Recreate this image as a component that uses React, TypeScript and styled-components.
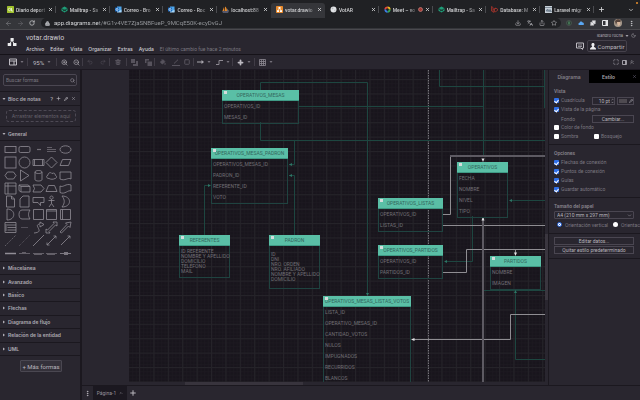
import React from "react";
import styled, { createGlobalStyle, css } from "styled-components";
import {
  ArrowLeft,
  ArrowRight,
  RotateCw,
  Lock,
  Star,
  Share,
  Puzzle,
  Search,
  ZoomIn,
  ZoomOut,
  Undo2,
  Redo2,
  Trash2,
  PaintBucket,
  Pencil,
  Square,
  Moon,
  Plus,
  X,
  ChevronDown,
  ChevronUp,
  ChevronsUp,
  Maximize,
  EllipsisVertical,
  Languages,
  Download,
} from "lucide-react";

const c = {
  panel: "#29262f",
  sheet: "#18151c",
  line: "#1b181f",
  text: "#b9b6bd",
  dim: "#7b7780",
  faint: "#65616b",
  node: "#5abfa6",
  teal: "#1d4640",
};

const wide = `Inter, "Liberation Sans", sans-serif`;

const GlobalStyle = createGlobalStyle`
  * { box-sizing: border-box; }
  html, body, #root { height: 100%; }
  body { margin: 0; background: ${c.panel}; font-family: Roboto, "Liberation Sans", sans-serif; font-size: 6px; color: ${c.text}; overflow: hidden; }
  button, input, select { font: inherit; color: inherit; background: none; border: 0; padding: 0; margin: 0; outline: none; }
  svg { display: block; flex: none; }
`;

const Window = styled.div`
  display: flex;
  flex-direction: column;
  height: 100vh;
`;

/* ---------- browser chrome ---------- */

const TabStrip = styled.div`
  display: flex;
  align-items: stretch;
  position: relative;
  height: 18px;
  padding: 3px 0 0 2px;
  background: #202124;
  color: #d0d1d3;
`;

const CaptureDot = styled.span`
  position: absolute;
  top: 2px;
  right: 2px;
  width: 2px;
  height: 2px;
  border-radius: 1px;
  background: #e8912d;
`;

const TabList = styled.div`
  display: flex;
  flex: 1;
  min-width: 0;
`;

const BrowserTab = styled.div<{ $active?: boolean; $plain?: boolean }>`
  display: flex;
  align-items: center;
  gap: 2px;
  flex: 1 1 0;
  min-width: 0;
  padding: 0 3px 2px 5px;
  border-radius: 3px 3px 0 0;
  background: ${(p) => (p.$active ? "#35363a" : "transparent")};
  background-image: ${(p) => (p.$plain || p.$active ? "none" : "linear-gradient(#4a4b4f, #4a4b4f)")};
  background-size: 1px 7px;
  background-position: right 3px;
  background-repeat: no-repeat;
`;

const TabTitle = styled.button`
  flex: 1;
  min-width: 0;
  text-align: left;
  white-space: nowrap;
  font-size: 5px;
  line-height: 8px;
  font-weight: 500;
  mask-image: linear-gradient(90deg, #000 70%, rgba(0, 0, 0, 0.2));
`;

const IconButton = styled.button`
  display: grid;
  place-items: center;
  flex: none;
`;

const StripEnd = styled.div`
  display: flex;
  justify-content: space-between;
  align-items: center;
  width: 46px;
  padding: 0 6px 2px 4px;
`;

const AddressRow = styled.div`
  display: flex;
  align-items: center;
  height: 12px;
  padding: 0 5px 1px 5px;
  background: #35363a;
  border-bottom: 1px solid #4a4a4e;
  color: #c6c7ca;
`;

const NavButtons = styled.div`
  display: flex;
  gap: 5px;
  width: 36px;
`;

const Omnibox = styled.label`
  display: flex;
  align-items: center;
  flex: 1;
  gap: 4px;
  height: 10px;
  padding: 0 4px 0 4px;
  border-radius: 5px;
  background: #202124;
`;

const UrlInput = styled.input`
  flex: 1;
  min-width: 0;
  font-size: 6px;
  line-height: 8px;
  color: transparent;
  background: linear-gradient(90deg, #e8eaed 45px, #9a9da1 45px);
  background-clip: text;
`;

const Cluster = styled.div<{ $gap: number }>`
  display: flex;
  align-items: center;
  gap: ${(p) => p.$gap}px;
`;

const Extensions = styled(Cluster)`
  padding-left: 5px;
`;

/* ---------- application header ---------- */

const Header = styled.header`
  display: flex;
  height: 25px;
  padding-left: 7px;
  border-bottom: 1px solid #151218;
`;

const HeaderText = styled.div`
  flex: 1;
  padding: 3px 0 0 9px;
  font-family: ${wide};
`;

const DocTitle = styled.h1`
  margin: 0;
  font-family: Roboto, "Liberation Sans", sans-serif;
  font-size: 7px;
  line-height: 10px;
  font-weight: 400;
  color: #cfccd3;
`;

const MenuBar = styled.nav`
  display: flex;
  align-items: center;
  gap: 6px;
  height: 11px;
  white-space: nowrap;
`;

const MenuItem = styled.button`
  font-size: 5px;
  line-height: 8px;
  font-weight: 500;
  color: #cfccd3;
`;

const SavedNote = styled.span`
  font-family: Roboto, "Liberation Sans", sans-serif;
  font-size: 5px;
  line-height: 8px;
  color: ${c.dim};
`;

const Account = styled.div`
  display: flex;
  flex-direction: column;
  align-items: flex-end;
  gap: 1px;
  padding-top: 2px;
`;

const UserRow = styled.div`
  display: flex;
  align-items: center;
  gap: 2px;
  height: 7px;
  padding-right: 4px;
  font-family: ${wide};
  font-size: 4px;
`;

const ShareRow = styled.div`
  display: flex;
  align-items: center;
  gap: 3px;
  padding-right: 13px;
`;

const ShareButton = styled.button`
  display: flex;
  align-items: center;
  justify-content: center;
  gap: 2px;
  width: 40px;
  height: 12px;
  border: 1px solid #45414b;
  border-radius: 2px;
  font-size: 6px;
`;

/* ---------- toolbar ---------- */

const Toolbar = styled.div`
  display: flex;
  align-items: center;
  height: 15px;
  padding: 0 4px 0 5px;
  border-bottom: 1px solid #1d1922;
`;

const Tool = styled.button<{ $w: number; $off?: boolean }>`
  display: flex;
  align-items: center;
  justify-content: center;
  gap: 3px;
  width: ${(p) => p.$w}px;
  font-size: 6px;
  color: ${(p) => (p.$off ? "#57535d" : "#bdbac1")};
`;

const Divider = styled.span`
  width: 1px;
  height: 8px;
  background: #403c46;
`;

const Spacer = styled.span`
  flex: 1;
`;

/* ---------- body ---------- */

const Main = styled.main`
  display: flex;
  flex: 1;
  min-height: 0;
`;

const Sidebar = styled.aside`
  width: 82px;
  flex: none;
  border-right: 2px solid ${c.line};
`;

const SearchArea = styled.div`
  height: 22px;
  padding: 4px 3px;
  border-bottom: 1px solid ${c.line};
`;

const SearchBox = styled.label`
  display: flex;
  align-items: center;
  height: 12px;
  padding: 0 1px 0 2px;
  border: 1px solid #4b4752;
  border-radius: 2px;
  color: #8b8790;
`;

const SearchInput = styled.input`
  flex: 1;
  min-width: 0;
  font-size: 5px;
  line-height: 8px;
  &::placeholder { color: #7b7780; opacity: 1; }
`;

const SectionTitle = styled.div`
  display: flex;
  align-items: center;
  height: 14px;
  padding: 0 4px 0 2px;
  border-bottom: 1px solid ${c.line};
`;

const SectionToggle = styled.button`
  display: flex;
  align-items: center;
  gap: 2px;
  flex: 1;
  font-family: ${wide};
  font-size: 5px;
  line-height: 8px;
  font-weight: 600;
  color: #aeabb3;
  white-space: nowrap;
`;

const DropArea = styled.div`
  height: 21px;
  padding: 4px 4px 4px 6px;
  border-bottom: 1px solid ${c.line};
`;

const DropHint = styled.div`
  height: 12px;
  border: 1px dashed #4d4954;
  border-radius: 3px;
  text-align: center;
  font-family: ${wide};
  font-size: 5px;
  line-height: 10px;
  color: ${c.faint};
  white-space: nowrap;
`;

const Palette = styled.div`
  display: grid;
  grid-template-columns: repeat(5, 1fr);
  grid-auto-rows: 13px;
  height: 121px;
  padding: 2px 7px 0 4px;
  overflow: hidden;
  border-bottom: 1px solid ${c.line};
`;

const Collapsed = styled.div`
  display: flex;
  flex-direction: column;
  height: 94px;
  ${SectionTitle} { flex: 1; }
`;

const MoreShapes = styled.button`
  display: block;
  width: 42px;
  height: 12px;
  margin: 4px auto 0 20px;
  border: 1px solid #4a4751;
  border-radius: 1px;
  background: #34313a;
  font-size: 6px;
  white-space: nowrap;
`;

const Workspace = styled.div`
  display: flex;
  flex-direction: column;
  flex: 1;
  min-width: 0;
`;

const Work = styled.div`
  display: flex;
  flex: 1;
  min-height: 0;
`;

const CanvasColumn = styled.section`
  display: flex;
  flex-direction: column;
  flex: 1;
  min-width: 0;
`;

const CanvasRow = styled.div`
  display: flex;
  flex: 1;
  min-height: 0;
  padding-left: 47px;
`;

const Sheet = styled.div`
  position: relative;
  flex: 1;
  overflow: hidden;
  background: ${c.sheet};
`;

const Wiring = styled.svg`
  position: absolute;
  inset: 0;
  width: 100%;
  height: 100%;
`;

const VTrack = styled.div`
  width: 3px;
  padding-top: 164px;
`;

const VThumb = styled.div`
  height: 66px;
  background: #3a363f;
`;

const HTrack = styled.div`
  height: 3px;
  padding-left: 103px;
`;

const HThumb = styled.div`
  width: 118px;
  height: 3px;
  background: #38343d;
`;

const Entity = styled.article<{ $x: number; $y: number; $w: number }>`
  position: absolute;
  left: ${(p) => p.$x}px;
  top: ${(p) => p.$y}px;
  width: ${(p) => p.$w}px;
  border: 1px solid #1f4340;
  font-size: 5px;
  color: #716f75;
  white-space: nowrap;
`;

const EntityTitle = styled.h2`
  display: flex;
  align-items: center;
  justify-content: center;
  position: relative;
  height: 11px;
  margin: -1px -1px 0;
  font-size: 5px;
  font-weight: 400;
  color: #33665c;
  background: ${c.node};
  border: solid #3f9a85;
  border-width: 0 0 1px;
`;

const Fold = styled.button`
  position: absolute;
  left: 2px;
  top: 1px;
  width: 3px;
  height: 3px;
  background: #d5dcdc;
`;

const Field = styled.div`
  height: 11px;
  padding-left: 1px;
  line-height: 11px;
`;

const FieldBlock = styled.div<{ $pad: number }>`
  padding: ${(p) => p.$pad}px 1px;
  line-height: 5px;
`;

/* ---------- format panel ---------- */

const Panel = styled.aside`
  width: 92px;
  flex: none;
  overflow: hidden;
  border-left: 1px solid ${c.line};
  font-size: 5px;
  color: ${c.dim};
`;

const PanelTabs = styled.div`
  display: flex;
  height: 13px;
`;

const PanelTab = styled.button<{ $idle?: boolean; $w: number }>`
  display: grid;
  place-items: center;
  width: ${(p) => p.$w}px;
  font-family: ${wide};
  font-size: 5px;
  font-weight: 600;
  color: ${(p) => (p.$idle ? "#a9a6ad" : "#85818a")};
  background: ${(p) => (p.$idle ? "#000" : "transparent")};
`;

const Group = styled.section`
  padding: 3px 6px 3px 5px;
  border-bottom: 1px solid ${c.line};
`;

const GroupTitle = styled.h3`
  margin: 0;
  font-size: 5px;
  line-height: 10px;
  font-weight: 600;
  color: #85818a;
`;

const Option = styled.div`
  display: flex;
  align-items: center;
  height: 9px;
  white-space: nowrap;
`;

const CheckLabel = styled.label<{ $w?: number }>`
  display: flex;
  align-items: center;
  gap: 2px;
  flex: ${(p) => (p.$w ? `0 0 ${p.$w}px` : "1")};
  line-height: 9px;
`;

const Check = styled.input`
  appearance: none;
  display: grid;
  place-items: center;
  width: 5px;
  height: 5px;
  border-radius: 1px;
  background: #fff;
  &:checked { background: #2f6fe8; }
  &:checked::after {
    content: "";
    width: 2px;
    height: 3px;
    border: solid #fff;
    border-width: 0 1px 1px 0;
    transform: rotate(40deg);
  }
`;

const Radio = styled.input`
  appearance: none;
  width: 5px;
  height: 5px;
  border-radius: 50%;
  background: #fff;
  &:checked {
    border: 1px solid #2f6fe8;
    background: radial-gradient(#2f6fe8 40%, #fff 45%);
  }
`;

const boxed = css`
  height: 8px;
  border: 1px solid #4a4651;
  color: ${c.text};
  font-size: 5px;
  line-height: 6px;
`;

const SizeBox = styled.span`
  ${boxed}
  display: flex;
  align-items: center;
  width: 23px;
  margin-right: 2px;
`;

const SizeInput = styled.input`
  width: 17px;
  text-align: right;
`;

const Spin = styled.span`
  display: flex;
  flex-direction: column;
  padding-left: 1px;
`;

const GridColor = styled.button`
  ${boxed}
  display: flex;
  align-items: center;
  gap: 2px;
  width: 17px;
  padding-left: 1px;
`;

const Swatch = styled.span`
  width: 8px;
  height: 4px;
  background: #4e4a50;
`;

const FillLabel = styled.span`
  flex: 1;
  padding-left: 7px;
`;

const ChangeButton = styled.button`
  ${boxed}
  width: 42px;
`;

const PaperSelect = styled.span`
  ${boxed}
  display: flex;
  align-items: center;
  padding-right: 1px;
  border-radius: 1px;
`;

const Select = styled.select`
  appearance: none;
  flex: 1;
  min-width: 0;
  padding-left: 2px;
`;

const Orientation = styled.div`
  display: flex;
  gap: 5px;
  height: 11px;
  padding-left: 3px;
  align-items: center;
  white-space: nowrap;
`;

const RadioLabel = styled.label`
  display: flex;
  align-items: center;
  gap: 3px;
  flex: none;
`;

const WideButton = styled.button`
  ${boxed}
  display: block;
  width: 100%;
  margin-bottom: 1px;
`;

/* ---------- footer ---------- */

const PageBar = styled.footer`
  display: flex;
  align-items: center;
  height: 15px;
  border-top: 1px solid ${c.line};
`;

const PageTab = styled.button`
  display: flex;
  align-items: center;
  justify-content: center;
  gap: 3px;
  align-self: stretch;
  width: 34px;
  background: #1b1820;
  font-size: 5px;
  color: #96929b;
`;

const BarSlot = styled.button`
  display: grid;
  place-items: center;
  width: 11px;
`;

/* ---------- small drawings ---------- */

const Caret = ({ side = "down", color = "#77737c" }: { side?: "down" | "right"; color?: string }) => (
  <svg width="4" height="4" viewBox="0 0 4 4" fill={color}>
    <path d={side === "down" ? "M.5 1h3L2 3z" : "M1 .5v3L3 2z"} />
  </svg>
);

type FavKind = "ole" | "mail" | "outlook" | "pma" | "drawio" | "globe" | "meet" | "laravel" | "doc";

const Favicon = ({ kind }: { kind: FavKind }) => (
  <svg width="7" height="7" viewBox="0 0 14 14">
    {kind === "ole" && (
      <>
        <rect width="14" height="14" rx="1" fill="#9fc02c" />
        <circle cx="5" cy="7" r="2.4" fill="none" stroke="#fff" strokeWidth="1.4" />
        <path d="M9 4v6h3" stroke="#fff" strokeWidth="1.4" fill="none" />
      </>
    )}
    {kind === "mail" && (
      <>
        <path d="M1 4.500 7 1l6 3.500v5L7 13 1 9.500z" fill="#1f9d78" />
        <path d="M1 5l6 4 6-4M4 10l3-2 3 2" stroke="#17211f" strokeWidth="1.500" fill="none" />
      </>
    )}
    {kind === "outlook" && (
      <>
        <rect x="4" y="1" width="9" height="11" fill="#4ea5ea" />
        <path d="M4 7l5 3 4-3v6H4z" fill="#a7d5f7" />
        <rect y="3" width="8" height="8" rx="1" fill="#1667bd" />
        <circle cx="4" cy="7" r="2" fill="none" stroke="#fff" strokeWidth="1.300" />
      </>
    )}
    {kind === "pma" && (
      <>
        <path d="M1 10 4 2l1 8zM6 10V1c3 2 4 5 4 9z" fill="#e58a2b" />
        <path d="M0 11h14l-2 2H2z" fill="#8b8fb0" />
        <path d="M11 10V5l2 5z" fill="#b9bbd0" />
      </>
    )}
    {kind === "drawio" && (
      <>
        <rect width="14" height="14" rx="1.500" fill="#e88a2c" />
        <path d="M7 4 4 9M7 4l3 5" stroke="#fff" strokeWidth="1.200" />
        <path d="M5 2h4v3.500H5zM2 8.500h4V12H2zM8 8.500h4V12H8z" fill="#fff" />
      </>
    )}
    {kind === "globe" && (
      <>
        <circle cx="7" cy="7" r="6" fill="#e2e4e6" />
        <path d="M3 4l3-1 1 2-2 2zM8 8l3-1-1 4z" fill="#b7babd" />
      </>
    )}
    {kind === "meet" && (
      <g fill="none" strokeWidth="3.500">
        <path d="M2.500 7A4.500 4.500 0 0 1 7 2.500" stroke="#e8453c" />
        <path d="M7 2.500A4.500 4.500 0 0 1 11.500 7" stroke="#f5b921" />
        <path d="M11.500 7A4.500 4.500 0 0 1 7 11.500" stroke="#35a853" />
        <path d="M7 11.500A4.500 4.500 0 0 1 2.500 7" stroke="#3d7eea" />
      </g>
    )}
    {kind === "laravel" && (
      <path d="M1 1l3 2v7l4 2 5-3V6l-3-1.500L7 6v5M4 7l6-3M1 1v9l5 3" fill="none" stroke="#b0362c" strokeWidth="1.500" />
    )}
    {kind === "doc" && (
      <>
        <rect width="14" height="14" fill="#c7d0d8" />
        <path d="M0 3h14M2 10l3-4 3 3 2-2 3 4z" stroke="#5b6b7a" strokeWidth="1.300" fill="#8192a1" />
      </>
    )}
  </svg>
);

const DrawioLogo = () => (
  <svg width="10" height="25" viewBox="0 0 10 25" fill="#ececee">
    <path d="M5 10 2.500 14.500M5 10l2.500 4.500" stroke="#ececee" strokeWidth="1" />
    <rect x="3.500" y="8" width="3.200" height="3" rx=".5" />
    <rect x=".7" y="13" width="3.500" height="3" rx=".5" />
    <rect x="6" y="13" width="3.500" height="3" rx=".5" />
  </svg>
);

const shapes: React.ReactNode[] = [
  <rect x="1" y="3.5" width="11" height="6" />,
  <rect x="1" y="3.5" width="11" height="6" rx="1.5" />,
  <path d="M5 6.500h4" strokeWidth="1.200" opacity=".7" />,
  <path d="M2 4.500h5M2 6.500h9M2 8.500h9" opacity=".7" />,
  <ellipse cx="6.500" cy="6.500" rx="5.500" ry="3.700" />,
  <rect x="1" y="1" width="11" height="11" />,
  <circle cx="6.500" cy="6.500" r="5.500" />,
  <path d="M1 3.500h11v6H1zM2.500 3.500v6M10.500 3.500v6" />,
  <path d="M6.500 1 12 6.500 6.500 12 1 6.500z" />,
  <path d="M3.500 3.500H12l-2.500 6H1z" />,
  <path d="M3.500 3h6L12 6.500 9.500 10h-6L1 6.500z" />,
  <path d="M2.500 1 11 6.500 2.500 12z" />,
  <path d="M3 3v7.500c0 2 7 2 7 0V3c0-2-7-2-7 0 0 2 7 2 7 0" />,
  <path d="M4 9.500C1 9.500 1 6.500 3 6.200 3 3.500 6 3 7 4.500c2-1 3.500 0 3.200 1.700C12.500 7 11.500 9.500 10 9.500c-2 1-4 1-6 0z" />,
  <path d="M1 3h11v7C9 8 6 12.500 1 10z" />,
  <path d="M1 1h11v11H1zM4 1v11M1 4h11" />,
  <path d="M1 3h9l2 1.500V10H3L1 8.500zM1 3l2 1.500h9M3 4.500V10" />,
  <path d="M1 3h8l3 3.500L9 10H1l1.500-3.500z" />,
  <path d="M3.500 3.500h6l2.500 6H1z" />,
  <path d="M1 4c3 2 6-3 11-1v6c-3-1.500-6 4-11 1.500z" />,
  <path d="M2.500 1h5l3 3v8h-8zM7.500 1v3h3" />,
  <path d="M5 1h6v11H2V4z" />,
  <path d="M1 2.500h11v5H8.500v3L6 7.500H1z" />,
  <path d="M6.500 4.200V8.500M3.500 5.500h6M6.500 8.500 4 12M6.500 8.500 9 12M6.500 1a1.600 1.600 0 1 0 .01 0" />,
  <path d="M3 1c10 0 10 11 0 11 3-4 3-7 0-11z" />,
  <path d="M3 1c9 0 9 11 0 11z" />,
  <path d="M4 2h8c-2 3-2 6 0 9H4C0 11 0 2 4 2z" />,
  <path d="M1.500 1.500h10v10h-10z" />,
  <path d="M1.500 1.500h10v10h-10zM1.500 3h10" />,
  <path d="M1.500 1.500h10v10h-10zM3.500 1.500v10" />,
  <path d="M1 1.500h11v10H1zM1 4h11M3.500 6.500H12M3.500 9H12M2 5v5" />,
  <path d="M3 6.500h7" opacity=".5" />,
  <path d="M2 12c12-1-2-8 6-9V1l4 2.500L8 6V4" />,
  <path d="M1 12V8l1.500 1L9 2.500 8 1h4v4l-1.500-1L4 10.500 5 12z" />,
  <path d="M1 11l7-7.500L6.500 2 12 1l-1 5.500L9.500 5 2.500 12z" />,
  <path d="M1 12 12 1" strokeDasharray="1.500 1" opacity=".7" />,
  <path d="M1 12 12 1" strokeDasharray="1 1" opacity=".6" />,
  <path d="M1 12 12 1" />,
  <path d="M2 11l9-9M2 8.500V11h2.500M8.500 2H11v2.500" />,
  <path d="M2 11l9-9M8.500 2H11v2.500" />,
  <path d="M1 6.500h11" strokeWidth="1.500" />,
  <path d="M1 6.500h11M4 5.500h4" opacity=".7" />,
  <path d="M1 6.500h11M2 7.500h8" opacity=".7" />,
  <path d="M1 6.500h11M2 7.500h8" opacity=".7" />,
  <path d="M1 6.500h11M5 5.500h4M5 7.500h4" />,
];

const Shape = ({ children }: { children: React.ReactNode }) => (
  <svg width="13" height="13" viewBox="0 0 13 13" fill="none" stroke="#918d96" strokeWidth=".8">
    {children}
  </svg>
);

/* ---------- data ---------- */

const browserTabs: { title: string; icon: FavKind; active?: boolean; plain?: boolean; recording?: boolean }[] = [
  { title: "Diario deport", icon: "ole" },
  { title: "Mailtrap - Sa", icon: "mail" },
  { title: "Correo - Bro", icon: "outlook" },
  { title: "Correo - Roc", icon: "outlook" },
  { title: "localhost:88", icon: "pma", plain: true },
  { title: "votar.drawio", icon: "drawio", active: true },
  { title: "VotAR", icon: "globe" },
  { title: "Meet – vo", icon: "meet", recording: true },
  { title: "Mailtrap - Sa", icon: "mail" },
  { title: "Database: M", icon: "laravel" },
  { title: "Laravel migr", icon: "doc" },
];

const entities: { name: string; x: number; y: number; w: number; fields?: string[]; block?: string[]; pad?: number }[] = [
  { name: "OPERATIVOS_MESAS", x: 93, y: 20, w: 77, fields: ["OPERATIVOS_ID", "MESAS_ID"] },
  { name: "OPERATIVOS_MESAS_PADRON", x: 82, y: 78, w: 77, fields: ["OPERATIVOS_MESAS_ID", "PADRON_ID", "REFERENTE_ID", "VOTO"] },
  { name: "REFERENTES", x: 50, y: 165, w: 51, block: ["ID REFERENTE", "NOMBRE Y APELLIDO", "DOMICILIO", "TELÉFONO", "MAIL"], pad: 3 },
  { name: "PADRON", x: 140, y: 165, w: 51, block: ["ID", "DNI", "NRO. ORDEN", "NRO. AFILIADO", "NOMBRE Y APELLIDO", "DOMICILIO"], pad: 6 },
  { name: "OPERATIVOS_LISTAS", x: 249, y: 128, w: 65, fields: ["OPERATIVOS_ID", "LISTAS_ID"] },
  { name: "OPERATIVOS", x: 328, y: 92, w: 51, fields: ["FECHA", "NOMBRE", "NIVEL", "TIPO"] },
  { name: "OPERATIVOS_PARTIDOS", x: 249, y: 175, w: 65, fields: ["OPERATIVOS_ID", "PARTIDOS_ID"] },
  { name: "PARTIDOS", x: 361, y: 186, w: 51, fields: ["NOMBRE", "IMAGEN"] },
  {
    name: "OPERATIVOS_MESAS_LISTAS_VOTOS",
    x: 194,
    y: 226,
    w: 88,
    fields: ["LISTA_ID", "OPERATIVO_MESAS_ID", "CANTIDAD_VOTOS", "NULOS", "IMPUGNADOS", "RECURRIDOS", "BLANCOS"],
  },
];

const tealWires = [
  "M131.500 20V12.500H238.500V225",
  "M170 36.500H354.500V0",
  "M131.500 52V70.500H500",
  "M165.500 70.500V94.500H160",
  "M160 105.500H165.500V165",
  "M75.500 165V115.500H81",
  "M310.500 0V16.500H500",
  "M354.500 0V86",
  "M415.500 0V38",
  "M500 130.500H381",
  "M343.500 146V191.500H316",
  "M354.500 220.500H500",
  "M500 289.500H386.500V222",
];

const lightWires = [
  "M314 144.500H321.500V86",
  "M314 155.500H500",
  "M314 202.500H337.500V179.500H500",
  "M386.500 179.500V184",
  "M500 244.500H381.500V269.500H284",
];

const collapsedSections = ["Miscelánea", "Avanzado", "Básico", "Flechas", "Diagrama de flujo", "Relación de la entidad", "UML"];

const Diagram = () => (
  <Sheet>
    <Wiring>
      <defs>
        <pattern id="minor" width="3.600" height="3.600" patternUnits="userSpaceOnUse" x="10.400" y="9.600">
          <path d="M0 .5H3.600M.5 0V3.600" stroke="#1c1920" strokeWidth=".7" />
        </pattern>
        <pattern id="major" width="14.400" height="14.400" patternUnits="userSpaceOnUse" x="10" y="9">
          <path d="M0 .5H14.400M.5 0V14.400" stroke="#252329" strokeWidth="1" />
        </pattern>
      </defs>
      <rect width="100%" height="100%" fill="url(#minor)" />
      <rect width="100%" height="100%" fill="url(#major)" />
      <path d="M299.500 0V400" stroke="#77747b" strokeDasharray="1.500 1" />
      <g fill="none" stroke={c.teal}>
        {tealWires.map((d) => (
          <path key={d} d={d} />
        ))}
      </g>
      <g fill="none" stroke="#8f8d92">
        {lightWires.map((d) => (
          <path key={d} d={d} />
        ))}
      </g>
      <path d="M321 86H500M354 148V400" fill="none" stroke="#5d5a62" strokeWidth="2" />
      <g fill="#2d7565">
        <path d="M160 94.500l3-1.500v3zM160 105.500l3-1.500v3zM82 115.500l-3-1.500v3zM380 130.500l3-1.500v3zM315 191.500l3-1.500v3zM238.500 226l-1.500-3h3zM386.500 220l-1.500 3h3z" />
      </g>
      <g fill="#e4e3e6">
        <path d="M354 92l-1.500-3.500h3zM354 147l-1.500 3.500h3zM386.500 186l-1.500-3.500h3zM282 269.500l3.500-1.500v3z" />
      </g>
    </Wiring>
    {entities.map((e) => (
      <Entity key={e.name} $x={e.x} $y={e.y} $w={e.w}>
        <EntityTitle>
          <Fold aria-label={`Contraer ${e.name}`} />
          {e.name}
        </EntityTitle>
        {e.fields?.map((f) => (
          <Field key={f}>{f}</Field>
        ))}
        {e.block && (
          <FieldBlock $pad={e.pad ?? 3}>
            {e.block.map((f) => (
              <div key={f}>{f}</div>
            ))}
          </FieldBlock>
        )}
      </Entity>
    ))}
  </Sheet>
);

const CheckOption = ({ label, on, width }: { label: string; on?: boolean; width?: number }) => (
  <CheckLabel $w={width}>
    <Check type="checkbox" defaultChecked={on} />
    {label}
  </CheckLabel>
);

const FormatPanel = () => (
  <Panel>
    <PanelTabs>
      <PanelTab $w={40}>Diagrama</PanelTab>
      <PanelTab $w={39} $idle>
        Estilo
      </PanelTab>
      <PanelTab $w={12} $idle aria-label="Cerrar">
        <X size={5} color="#77738a" />
      </PanelTab>
    </PanelTabs>
    <Group>
      <GroupTitle>Vista</GroupTitle>
      <Option>
        <CheckOption label="Cuadrícula" on />
        <SizeBox>
          <SizeInput aria-label="Tamaño de cuadrícula" defaultValue="10 pt" />
          <Spin>
            <ChevronUp size={3} strokeWidth={4} />
            <ChevronDown size={3} strokeWidth={4} />
          </Spin>
        </SizeBox>
        <GridColor aria-label="Color de cuadrícula">
          <Swatch />
          <Pencil size={4} strokeWidth={3} />
        </GridColor>
      </Option>
      <Option>
        <CheckOption label="Vista de la página" on />
      </Option>
      <Option>
        <FillLabel>Fondo</FillLabel>
        <ChangeButton>Cambiar...</ChangeButton>
      </Option>
      <Option>
        <CheckOption label="Color de fondo" />
      </Option>
      <Option>
        <CheckOption label="Sombra" width={40} />
        <CheckOption label="Bosquejo" />
      </Option>
    </Group>
    <Group>
      <GroupTitle>Opciones</GroupTitle>
      {["Flechas de conexión", "Puntos de conexión", "Guías", "Guardar automático"].map((o) => (
        <Option key={o}>
          <CheckOption label={o} on />
        </Option>
      ))}
    </Group>
    <Group>
      <GroupTitle>Tamaño del papel</GroupTitle>
      <PaperSelect>
        <Select aria-label="Tamaño del papel">
          <option>A4 (210 mm x 297 mm)</option>
        </Select>
        <ChevronDown size={5} />
      </PaperSelect>
      <Orientation>
        <RadioLabel>
          <Radio type="radio" name="orientation" defaultChecked />
          Orientación vertical
        </RadioLabel>
        <RadioLabel>
          <Radio type="radio" name="orientation" />
          Orientación horizontal
        </RadioLabel>
      </Orientation>
    </Group>
    <Group>
      <WideButton>Editar datos...</WideButton>
      <WideButton>Quitar estilo predeterminado</WideButton>
    </Group>
  </Panel>
);

const ShapesSidebar = () => (
  <Sidebar>
    <SearchArea>
      <SearchBox>
        <SearchInput placeholder="Buscar formas" aria-label="Buscar formas" />
        <Search size={5} strokeWidth={3} />
      </SearchBox>
    </SearchArea>
    <SectionTitle>
      <SectionToggle>
        <Caret color="#b3b0b8" />
        Bloc de notas
      </SectionToggle>
      <Cluster $gap={3}>
        <IconButton aria-label="Ayuda">?</IconButton>
        <Plus size={5} strokeWidth={3} />
        <Pencil size={4} strokeWidth={4} />
        <X size={5} />
      </Cluster>
    </SectionTitle>
    <DropArea>
      <DropHint>Arrastrar elementos aquí</DropHint>
    </DropArea>
    <SectionTitle>
      <SectionToggle>
        <Caret color="#b3b0b8" />
        General
      </SectionToggle>
    </SectionTitle>
    <Palette>
      {shapes.map((s, i) => (
        <Shape key={i}>{s}</Shape>
      ))}
    </Palette>
    <Collapsed>
      {collapsedSections.map((s) => (
        <SectionTitle key={s}>
          <SectionToggle>
            <Caret side="right" color="#b3b0b8" />
            {s}
          </SectionToggle>
        </SectionTitle>
      ))}
    </Collapsed>
    <MoreShapes>+ Más formas</MoreShapes>
  </Sidebar>
);

const ToolbarRow = () => (
  <Toolbar>
    <Tool $w={22} aria-label="Ver">
      <svg width="8" height="8" viewBox="0 0 8 8" fill="none" stroke="currentColor">
        <path d="M.5 1h7v6h-7zM.5 3h7M5 3v4" />
      </svg>
      <Caret />
    </Tool>
    <Divider />
    <Tool $w={28}>
      95%
      <Caret />
    </Tool>
    <Divider />
    <Tool $w={14} aria-label="Acercar">
      <ZoomIn size={7} />
    </Tool>
    <Tool $w={11} aria-label="Alejar">
      <ZoomOut size={7} />
    </Tool>
    <Divider />
    <Tool $w={14} $off aria-label="Deshacer">
      <Undo2 size={6} />
    </Tool>
    <Tool $w={12} $off aria-label="Rehacer">
      <Redo2 size={6} />
    </Tool>
    <Divider />
    <Tool $w={16} $off aria-label="Borrar">
      <Trash2 size={6} strokeWidth={4} />
    </Tool>
    <Divider />
    <Tool $w={15} $off aria-label="Al frente">
      <svg width="7" height="7" viewBox="0 0 7 7" fill="currentColor">
        <path d="M0 0h4v4H0zM5 2v3H2v2h5V2z" />
      </svg>
    </Tool>
    <Tool $w={12} $off aria-label="Al fondo">
      <svg width="7" height="7" viewBox="0 0 7 7" fill="currentColor">
        <path d="M0 0h4v1.500H1.500V4H0zM2.500 2.500H7V7H2.500z" />
      </svg>
    </Tool>
    <Divider />
    <Tool $w={15} $off aria-label="Relleno">
      <PaintBucket size={6} fill="currentColor" />
    </Tool>
    <Tool $w={11} $off aria-label="Línea">
      <svg width="8" height="7" viewBox="0 0 8 7" fill="none" stroke="currentColor">
        <path d="M2 4.500 6 .7M0 6.500h8" />
      </svg>
    </Tool>
    <Tool $w={12} $off aria-label="Sombra">
      <Square size={6} strokeWidth={4} />
    </Tool>
    <Divider />
    <Tool $w={20} $off aria-label="Conexión">
      <svg width="7" height="6" viewBox="0 0 7 6" fill="#aaa7ae">
        <path d="M0 2.500h4.500V1L7 3 4.500 5V3.500H0z" />
      </svg>
      <Caret />
    </Tool>
    <Tool $w={18} $off aria-label="Puntos">
      <svg width="7" height="7" viewBox="0 0 7 7" fill="none" stroke="#8d8992">
        <path d="M0 5.500h3V1.500h4" />
      </svg>
      <Caret />
    </Tool>
    <Divider />
    <Tool $w={21} aria-label="Insertar">
      <Plus size={7} strokeWidth={6} />
      <Caret />
    </Tool>
    <Divider />
    <Tool $w={21} aria-label="Tabla">
      <svg width="7" height="7" viewBox="0 0 7 7" fill="none" stroke="#8d8992" strokeWidth=".8">
        <path d="M.5.5h6v6h-6zM.5 2.500h6M.5 4.500h6M2.500.5v6M4.500.5v6" />
      </svg>
      <Caret />
    </Tool>
    <Spacer />
    <Tool $w={8} aria-label="Pantalla completa">
      <Maximize size={6} />
    </Tool>
    <Tool $w={8} aria-label="Formato">
      <svg width="5" height="5" viewBox="0 0 5 5" fill="none" stroke="currentColor" strokeWidth=".8">
        <path d="M.5.5h4v4h-4zM3.500.5v4" />
      </svg>
    </Tool>
    <Tool $w={8} aria-label="Contraer">
      <ChevronsUp size={6} />
    </Tool>
  </Toolbar>
);

const App = () => (
  <Window>
    <GlobalStyle />
    <TabStrip>
      <TabList>
        {browserTabs.map((t, i) => (
          <BrowserTab key={i} $active={t.active} $plain={t.plain}>
            <Favicon kind={t.icon} />
            <TabTitle>{t.title}</TabTitle>
            {t.recording && (
              <svg width="5" height="5" viewBox="0 0 5 5">
                <circle cx="2.500" cy="2.500" r="2" fill="#a33a34" stroke="#d9938f" strokeWidth=".6" />
              </svg>
            )}
            <IconButton aria-label="Cerrar pestaña">
              <X size={5} strokeWidth={4} />
            </IconButton>
          </BrowserTab>
        ))}
      </TabList>
      <StripEnd>
        <IconButton aria-label="Nueva pestaña">
          <Plus size={7} strokeWidth={3} />
        </IconButton>
        <IconButton aria-label="Buscar pestañas">
          <ChevronDown size={6} strokeWidth={3} />
        </IconButton>
      </StripEnd>
      <CaptureDot />
    </TabStrip>
    <AddressRow>
      <NavButtons>
        <IconButton aria-label="Atrás">
          <ArrowLeft size={7} color="#808185" />
        </IconButton>
        <IconButton aria-label="Adelante">
          <ArrowRight size={7} color="#67686c" />
        </IconButton>
        <IconButton aria-label="Recargar">
          <RotateCw size={6} strokeWidth={3} />
        </IconButton>
      </NavButtons>
      <Omnibox>
        <Lock size={5} strokeWidth={3} fill="#9b9da1" />
        <UrlInput aria-label="Dirección" defaultValue="app.diagrams.net/#G1v4VE7ZjaSNBFueP_9MCqE50K-ecyDvGJ" />
        <Cluster $gap={6}>
          <Download size={6} />
          <Languages size={6} />
          <Share size={6} />
          <Star size={6} />
        </Cluster>
      </Omnibox>
      <Extensions $gap={6}>
        <svg width="6" height="6" viewBox="0 0 6 6">
          <circle cx="3" cy="3" r="2.500" fill="#2c3b34" stroke="#56645c" strokeWidth=".6" />
          <path d="M3 1.500v3" stroke="#5ba873" />
        </svg>
        <svg width="6" height="6" viewBox="0 0 6 6">
          <path d="M1.500 5C0 5 0 3 1.500 3 1.500 1 4 1 4.500 2.500 6.300 2.500 6.300 5 5 5z" fill="#5aa7f2" />
        </svg>
        <Puzzle size={6} fill="#e4e5e7" color="#e4e5e7" />
        <svg width="6" height="6" viewBox="0 0 6 6">
          <path d="M.5.500h5v5h-5z" fill="none" stroke="#e4e5e7" />
          <path d="M3.500 0H6v6H3.500z" fill="#e4e5e7" />
        </svg>
        <svg width="8" height="8" viewBox="0 0 8 8">
          <circle cx="4" cy="4" r="4" fill="#a89a8c" />
          <path d="M1 2C3-.5 6 0 7 2L6 3H3L2 6z" fill="#54423a" />
          <path d="M3 3h3v3L4 7z" fill="#d9b79c" />
        </svg>
        <EllipsisVertical size={7} strokeWidth={3} />
      </Extensions>
    </AddressRow>
    <Header>
      <DrawioLogo />
      <HeaderText>
        <DocTitle>votar.drawio</DocTitle>
        <MenuBar>
          {["Archivo", "Editar", "Vista", "Organizar", "Extras", "Ayuda"].map((m) => (
            <MenuItem key={m}>{m}</MenuItem>
          ))}
          <SavedNote>El último cambio fue hace 2 minutos</SavedNote>
        </MenuBar>
      </HeaderText>
      <Account>
        <UserRow>
          leandro rocha
          <Caret color="#a5a2a9" />
          <Moon size={5} />
        </UserRow>
        <ShareRow>
          <svg width="8" height="8" viewBox="0 0 8 8">
            <path d="M.5 1h7v5h-1v1.500L5 6H.5z" fill="none" stroke="#bdbac1" strokeWidth="1" />
            <path d="M2 3h4M2 4.500h4" stroke="#bdbac1" strokeWidth=".7" />
          </svg>
          <ShareButton>
            <svg width="6" height="7" viewBox="0 0 6 7" fill="#ececee">
              <path d="M3 0c2 0 1.800 2.500.8 3.500C4 4.500 6 4.500 6 6v.5H0V6c0-1.500 2-1.500 2.200-2.500C1.200 2.500 1 0 3 0z" />
            </svg>
            Compartir
          </ShareButton>
        </ShareRow>
      </Account>
    </Header>
    <ToolbarRow />
    <Main>
      <ShapesSidebar />
      <Workspace>
        <Work>
          <CanvasColumn>
            <CanvasRow>
              <Diagram />
              <VTrack>
                <VThumb />
              </VTrack>
            </CanvasRow>
            <HTrack>
              <HThumb />
            </HTrack>
          </CanvasColumn>
          <FormatPanel />
        </Work>
        <PageBar>
          <BarSlot aria-label="Páginas">
            <EllipsisVertical size={7} strokeWidth={3} />
          </BarSlot>
          <PageTab>
            Página-1
            <ChevronUp size={4} strokeWidth={3} />
          </PageTab>
          <BarSlot aria-label="Insertar página">
            <Plus size={8} strokeWidth={3} />
          </BarSlot>
        </PageBar>
      </Workspace>
    </Main>
  </Window>
);

export default App;
